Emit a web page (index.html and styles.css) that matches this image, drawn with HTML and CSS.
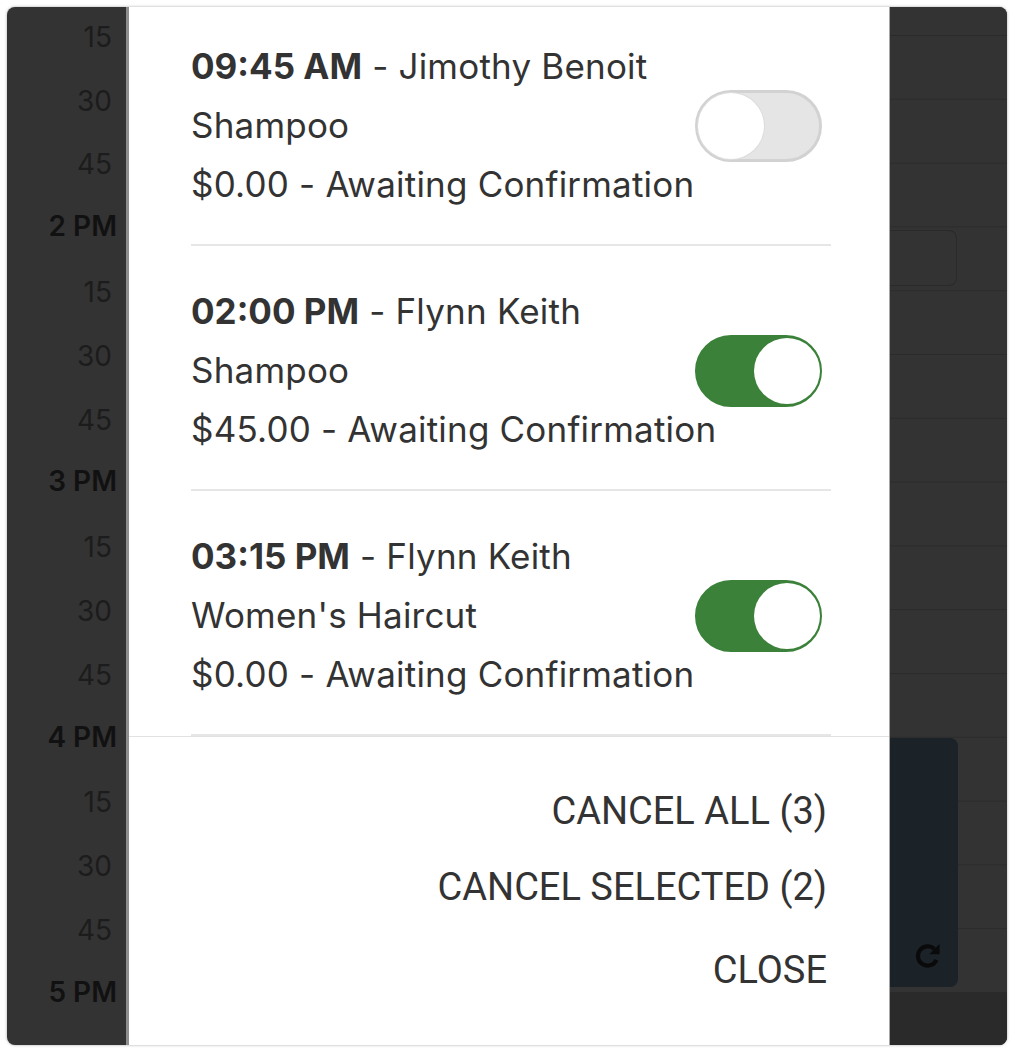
FILE: index.html
```html
<!DOCTYPE html>
<html lang="en">
<head>
<meta charset="utf-8">
<title>Appointments</title>
<link rel="stylesheet" href="styles.css">
</head>
<body>
<div class="frame">
  <div class="times">
    <div class="slot">15</div>
    <div class="slot">30</div>
    <div class="slot">45</div>
    <div class="slot hour"><span>2 PM</span></div>
    <div class="slot">15</div>
    <div class="slot">30</div>
    <div class="slot">45</div>
    <div class="slot hour"><span>3 PM</span></div>
    <div class="slot">15</div>
    <div class="slot">30</div>
    <div class="slot">45</div>
    <div class="slot hour"><span>4 PM</span></div>
    <div class="slot">15</div>
    <div class="slot">30</div>
    <div class="slot">45</div>
    <div class="slot hour"><span>5 PM</span></div>
  </div>

  <div class="modal">
    <div class="list">
      <div class="list-inner">
        <div class="row">
          <div class="info">
            <div class="line"><b>09:45 AM</b> - Jimothy Benoit</div>
            <div class="line">Shampoo</div>
            <div class="line">$0.00 - Awaiting Confirmation</div>
          </div>
          <div class="toggle off"><span class="knob"></span></div>
        </div>
        <div class="row">
          <div class="info">
            <div class="line"><b>02:00 PM</b> - Flynn Keith</div>
            <div class="line">Shampoo</div>
            <div class="line">$45.00 - Awaiting Confirmation</div>
          </div>
          <div class="toggle on"><span class="knob"></span></div>
        </div>
        <div class="row">
          <div class="info">
            <div class="line"><b>03:15 PM</b> - Flynn Keith</div>
            <div class="line">Women's Haircut</div>
            <div class="line">$0.00 - Awaiting Confirmation</div>
          </div>
          <div class="toggle on"><span class="knob"></span></div>
        </div>
      </div>
    </div>
    <div class="footer">
      <div class="btn">CANCEL ALL (3)</div>
      <div class="btn">CANCEL SELECTED (2)</div>
      <div class="btn btn-close">CLOSE</div>
    </div>
  </div>

  <div class="calendar">
    <div class="event event-small"></div>
    <div class="event event-large">
      <svg class="refresh" viewBox="0 0 24 24" width="29" height="29" aria-hidden="true">
        <path d="M19.4 15.6 A8 8 0 1 1 17.6 6.6" fill="none" stroke="#0a0a0a" stroke-width="3.4"/>
        <polygon points="22,2.5 22,11 13.5,11" fill="#0a0a0a"/>
      </svg>
    </div>
    <div class="cal-bottom"></div>
  </div>
</div>
</body>
</html>
```

FILE: styles.css
```css
html, body {
  margin: 0;
  padding: 0;
  background: #ffffff;
}

.frame {
  margin: 7px;
  width: 1000px;
  height: 1038px;
  border-radius: 8px;
  background: #333333;
  overflow: hidden;
  display: flex;
  box-shadow: 0 0 3px rgba(0, 0, 0, 0.35);
}

/* time column */
.times {
  width: 119px;
  flex: none;
  margin-top: -2px;
  font-family: Inter, "Liberation Sans", sans-serif;
}

.slot {
  height: 63.8px;
  display: flex;
  align-items: center;
  justify-content: flex-end;
  padding-right: 14px;
  font-size: 28px;
  color: #1c1c1c;
}

.slot.hour {
  padding-right: 9px;
  font-weight: 600;
  color: #111111;
}

.slot.hour span {
  padding-bottom: 4px;
}

/* modal */
.modal {
  width: 760px;
  flex: none;
  background: #ffffff;
  border-left: 3px solid #8e8e8e;
  border-right: 1px solid #a6a6a6;
  display: flex;
  flex-direction: column;
  overflow: hidden;
}

.list {
  height: 729px;
  flex: none;
  overflow: hidden;
}

.list-inner {
  margin-top: -6px;
}

.row {
  margin: 0 58px 0 62px;
  padding: 36px 9px 30px 0;
  border-bottom: 2px solid #e6e6e6;
  display: flex;
  align-items: center;
}

.info {
  flex: 1;
  min-width: 0;
  font-family: Inter, "Liberation Sans", sans-serif;
  font-size: 35px;
  letter-spacing: 0.2px;
  color: #333333;
}

.line {
  line-height: 59px;
  white-space: nowrap;
}

.line b {
  font-weight: 700;
  letter-spacing: 0;
}

.toggle {
  width: 127px;
  height: 72px;
  box-sizing: border-box;
  border-radius: 36px;
  display: flex;
  align-items: center;
  flex: none;
}

.toggle .knob {
  width: 66px;
  height: 66px;
  border-radius: 50%;
  background: #ffffff;
}

.toggle.off {
  background: #e5e5e5;
  border: 3px solid #d2d2d2;
  justify-content: flex-start;
}

.toggle.off .knob {
  box-shadow: 0 0 0 1px #dcdcdc;
}

.toggle.on {
  background: #3b8139;
  border: 2px solid #3b8139;
  justify-content: flex-end;
}

.footer {
  flex: 1;
  border-top: 1px solid #e2e2e2;
  padding: 36px 62px 0 0;
  display: flex;
  flex-direction: column;
  align-items: flex-end;
  font-family: Roboto, "Liberation Sans", sans-serif;
  font-size: 38px;
  color: #333333;
}

.btn {
  line-height: 76px;
  white-space: nowrap;
}

.btn-close {
  margin-top: 7px;
}

/* calendar column */
.calendar {
  flex: 1;
  display: flex;
  flex-direction: column;
  align-items: flex-start;
  background-color: #333333;
  background-image: linear-gradient(to bottom, transparent 0 62.8px, #2b2b2b 62.8px 63.8px);
  background-size: 100% 63.8px;
  background-position: 0 29px;
}

.event {
  width: 67px;
  box-sizing: border-box;
  border-radius: 0 8px 8px 0;
  flex: none;
}

.event-small {
  margin-top: 223px;
  height: 56px;
  border: 1px solid #2a2a2a;
  border-left: none;
  background: #333333;
}

.event-large {
  margin-top: 452px;
  width: 68px;
  height: 249px;
  background: #1b2328;
  display: flex;
  align-items: flex-end;
  justify-content: flex-end;
  padding: 0 16px 17px 0;
}

.cal-bottom {
  margin-top: 6px;
  align-self: stretch;
  flex: 1;
  background: #2a2a2a;
}
```
